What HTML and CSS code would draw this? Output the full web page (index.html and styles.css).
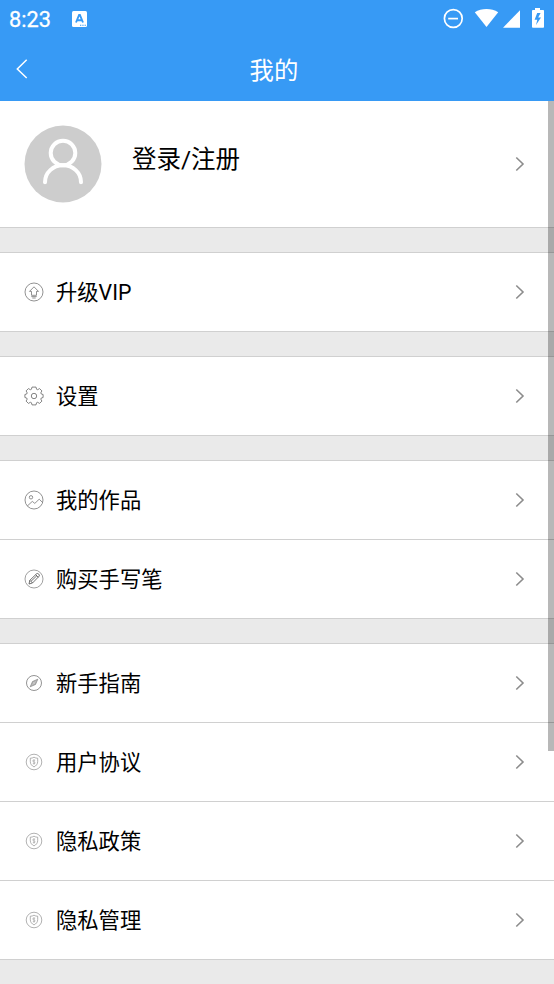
FILE: index.html
```html
<!DOCTYPE html>
<html lang="zh-CN">
<head>
<meta charset="utf-8">
<title>我的</title>
<link rel="stylesheet" href="styles.css">
</head>
<body>
<svg class="defs" width="0" height="0">
  <symbol id="chevron" viewBox="0 0 10 16"><path d="M1.300 1.500 8 8l-6.700 6.500" fill="none" stroke="#8c8c8c" stroke-width="1.600"/></symbol>
  <symbol id="shield" viewBox="0 0 20 20"><g fill="none" stroke="#888" stroke-width=".65"><circle cx="10" cy="10" r="7.800"/><path d="M10 5.200c1.200.8 2.400 1 3.700 1v3.400c0 2.500-1.600 4.300-3.700 5.300-2.100-1-3.700-2.800-3.700-5.300V6.200c1.300 0 2.500-.2 3.700-1z"/><path stroke-width=".5" d="M11.200 8.200H9.400c-.9 0-.9 1.400 0 1.600l1 .2c1 .2.9 1.700-.1 1.700H8.800M10 7.300v5.200"/></g></symbol>
</svg>
<header class="header">
  <div class="status">
    <span class="clock">8:23</span>
    <svg class="app" width="15" height="16" viewBox="0 0 15 16"><rect width="15" height="16" rx="1.500" fill="#fff"/><path d="M4 11.500 7.100 4h.8L11 11.500M5.200 9.300h4.600" fill="none" stroke="#379af5" stroke-width="1.900"/><path d="M8 14.300h1.300m1 0h1.300m1 0h1.300" stroke="#379af5" stroke-width="1.100"/></svg>
    <svg class="system" width="104" height="22" viewBox="0 0 104 22"><circle cx="10.300" cy="11.500" r="8.900" fill="none" stroke="#fff" stroke-width="1.700"/><path d="M5.200 11.600h9.800" stroke="#fff" stroke-width="1.700"/><path d="M31.800 5.300C38.500.9 48.500.9 55.200 5.300L43.500 20z" fill="#fff"/><path d="M60 20.800 77 3.200v17.600z" fill="#fff"/><path d="M92 1h5v2h3.200q.8 0 .8.800v16.200q0 .8-.8.800H90q-1 0-1-.8V3.800q0-.8 1-.8h2z" fill="#fff"/><path d="M94.200 6 91.600 12.700h2.700L93 18l5-7.500h-2.800L97.600 6z" fill="#379af5"/></svg>
  </div>
  <div class="titlebar">
    <svg class="back" width="12" height="20" viewBox="0 0 12 20"><path d="M10.700.8 1.300 10l9.400 9" fill="none" stroke="#fff" stroke-width="1.500"/></svg>
    <h1>我的</h1>
  </div>
</header>
<main>
  <section class="group">
    <a class="profile">
      <svg class="avatar" width="78" height="78" viewBox="0 0 78 78"><circle cx="39" cy="39" r="38.500" fill="#cdcdcd"/><g fill="none" stroke="#fff" stroke-width="4" stroke-linecap="round"><circle cx="39" cy="28" r="12.300"/><path d="M21 57.200C21 47.500 29 40.300 39 40.300S57 47.500 57 57.200"/></g></svg>
      <span>登录/注册</span>
      <svg class="chevron"><use href="#chevron"/></svg>
    </a>
  </section>
  <section class="group">
    <a class="row"><svg class="icon" viewBox="0 0 20 20"><g fill="none" stroke="#6e6e6e" stroke-width=".75"><circle cx="10" cy="10" r="9"/><path d="m10 4.800-4.500 4.600h2v3.900h5V9.400h2zM7.300 14.600h5.400M8.300 16h3.400"/></g></svg><span>升级VIP</span><svg class="chevron"><use href="#chevron"/></svg></a>
  </section>
  <section class="group">
    <a class="row"><svg class="icon" viewBox="0 0 20 20"><g fill="none" stroke="#666" stroke-width=".8"><path d="M8 1.100h4l.6 2.200 1 .4 2-1.100 2.300 2.300-1.100 2 .5 1.100 1.800.5v3l-1.800.5-.5 1.100 1.100 2-2.300 2.300-2-1.100-1 .4-.6 2.200H8l-.6-2.200-1-.4-2 1.100-2.300-2.300 1.100-2-.5-1.100-1.800-.5v-3l1.800-.5.5-1.100-1.100-2 2.300-2.300 2 1.100 1-.4z" stroke-linejoin="round"/><circle cx="10" cy="10" r="2.700"/></g></svg><span>设置</span><svg class="chevron"><use href="#chevron"/></svg></a>
  </section>
  <section class="group">
    <a class="row"><svg class="icon" viewBox="0 0 20 20"><g fill="none" stroke="#6e6e6e" stroke-width=".75"><circle cx="10" cy="10" r="9"/><circle cx="7" cy="7.300" r="1.700"/><path d="m3.300 16 5-4.600 2.500 2 4.400-4.200 3.400 3.300"/></g></svg><span>我的作品</span><svg class="chevron"><use href="#chevron"/></svg></a>
    <a class="row"><svg class="icon" viewBox="0 0 20 20"><circle cx="10" cy="10" r="9" fill="none" stroke="#777" stroke-width=".7"/><path d="m5 15 .8-3.700 7-6.700c1-.8 3.300 1.300 2.500 2.400l-6.800 7zM5.800 11.300l2.700 2.700M11.700 5.700l2.600 2.600M7 12.300l5.900-5.600" fill="none" stroke="#444" stroke-width=".75"/></svg><span>购买手写笔</span><svg class="chevron"><use href="#chevron"/></svg></a>
  </section>
  <section class="group">
    <a class="row"><svg class="icon" viewBox="0 0 20 20"><circle cx="10" cy="10" r="7.500" fill="none" stroke="#777" stroke-width=".8"/><path d="m13.800 6.200-5.300 2.300-2.300 5.300 5.300-2.300z" fill="#bbb" stroke="#777" stroke-width=".6"/><circle cx="10" cy="10" r="1" fill="#fff" stroke="#777" stroke-width=".4"/></svg><span>新手指南</span><svg class="chevron"><use href="#chevron"/></svg></a>
    <a class="row"><svg class="icon"><use href="#shield"/></svg><span>用户协议</span><svg class="chevron"><use href="#chevron"/></svg></a>
    <a class="row"><svg class="icon"><use href="#shield"/></svg><span>隐私政策</span><svg class="chevron"><use href="#chevron"/></svg></a>
    <a class="row"><svg class="icon"><use href="#shield"/></svg><span>隐私管理</span><svg class="chevron"><use href="#chevron"/></svg></a>
  </section>
</main>
<div class="scrollbar"></div>
</body>
</html>
```
FILE: styles.css
```css
* { box-sizing: border-box; }
body {
  margin: 0;
  height: 984px;
  overflow: hidden;
  position: relative;
  background: #eaeaea;
  color: #000;
  font-family: Roboto, "Noto Sans CJK SC", sans-serif;
}
.defs { position: absolute; }
.header { height: 101px; background: #379af5; color: #fff; }
.status { height: 38px; display: flex; align-items: center; padding: 0 7px 0 9px; }
.clock {
  width: 63px;
  padding-top: 2px;
  font-size: 21.7px;
  line-height: 38px;
  -webkit-text-stroke: .3px #fff;
}
.app { margin-top: -1px; }
.system { margin: -2px 0 0 auto; }
.titlebar {
  height: 63px;
  display: grid;
  grid-template-columns: 40px 1fr 46px;
  align-items: center;
}
.back { margin-left: 16px; margin-top: -2px; }
h1 { margin: 0; padding-top: 2px; text-align: center; font-size: 24.4px; line-height: 36px; font-weight: 400; }
.group { background: #fff; margin-bottom: 24px; box-shadow: 0 -1px #d0d0d0; }
.profile, .row { display: flex; align-items: center; border-bottom: 1px solid #d0d0d0; }
.profile { height: 127px; padding: 0 29px 0 24px; }
.profile span { margin: -9px 0 0 30px; font-size: 24.5px; line-height: 36px; }
.group:first-child { box-shadow: none; }
.group + .group { margin-top: 25px; }
.row { height: 79px; padding: 0 29px 0 24px; }
.row span { margin-left: 12px; padding-top: 2px; font-size: 21.3px; line-height: 32px; }
.icon { width: 20px; height: 20px; }
.chevron { width: 10px; height: 16px; margin-left: auto; }
.scrollbar {
  position: absolute;
  top: 101px;
  right: 0;
  width: 6px;
  height: 650px;
  background: rgba(0, 0, 0, .28);
}
```
